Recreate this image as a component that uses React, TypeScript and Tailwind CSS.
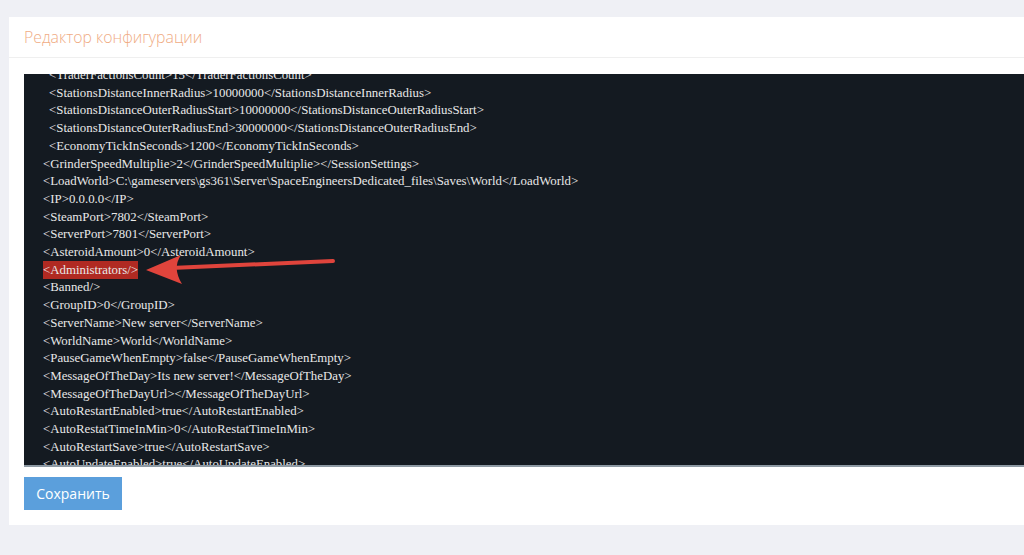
import React from "react";

const lines: { text: string; indent?: boolean; mark?: boolean }[] = [
  { text: "<TraderFactionsCount>15</TraderFactionsCount>", indent: true },
  { text: "<StationsDistanceInnerRadius>10000000</StationsDistanceInnerRadius>", indent: true },
  { text: "<StationsDistanceOuterRadiusStart>10000000</StationsDistanceOuterRadiusStart>", indent: true },
  { text: "<StationsDistanceOuterRadiusEnd>30000000</StationsDistanceOuterRadiusEnd>", indent: true },
  { text: "<EconomyTickInSeconds>1200</EconomyTickInSeconds>", indent: true },
  { text: "<GrinderSpeedMultiplie>2</GrinderSpeedMultiplie></SessionSettings>" },
  { text: "<LoadWorld>C:\\gameservers\\gs361\\Server\\SpaceEngineersDedicated_files\\Saves\\World</LoadWorld>" },
  { text: "<IP>0.0.0.0</IP>" },
  { text: "<SteamPort>7802</SteamPort>" },
  { text: "<ServerPort>7801</ServerPort>" },
  { text: "<AsteroidAmount>0</AsteroidAmount>" },
  { text: "<Administrators/>", mark: true },
  { text: "<Banned/>" },
  { text: "<GroupID>0</GroupID>" },
  { text: "<ServerName>New server</ServerName>" },
  { text: "<WorldName>World</WorldName>" },
  { text: "<PauseGameWhenEmpty>false</PauseGameWhenEmpty>" },
  { text: "<MessageOfTheDay>Its new server!</MessageOfTheDay>" },
  { text: "<MessageOfTheDayUrl></MessageOfTheDayUrl>" },
  { text: "<AutoRestartEnabled>true</AutoRestartEnabled>" },
  { text: "<AutoRestatTimeInMin>0</AutoRestatTimeInMin>" },
  { text: "<AutoRestartSave>true</AutoRestartSave>" },
  { text: "<AutoUpdateEnabled>true</AutoUpdateEnabled>" },
];

// red annotation arrow pointing at the highlighted tag
const Arrow = () => (
  <svg
    className="absolute left-[117px] top-[177px]"
    width="200"
    height="40"
    viewBox="0 0 200 40"
  >
    <path d="M192 10 L30 17" stroke="#e0443c" strokeWidth="4" strokeLinecap="round" fill="none" />
    <path d="M5 19 L40 4 Q31 17 41 33 Z" fill="#e0443c" />
  </svg>
);

export default function App() {
  return (
    <div className="h-[555px] overflow-hidden bg-[#eff0f5] pt-[17px] pl-[9px]">
      <div className="mr-[-20px] bg-white">
        <div className="h-[41px] border-b border-[#efefef] pl-[15px] pt-[9px]">
          <h2 className="text-[15.8px] font-light text-[#f0ac84] [font-family:'Open_Sans',sans-serif]">
            Редактор конфигурации
          </h2>
        </div>
        <div className="px-[15px] pt-[16px] pb-[15px]">
          <div className="relative h-[393px] overflow-hidden border-b-2 border-[#8d99a3] bg-[#141a21]">
            <div className="mt-[-7px] pl-[19px] text-[12.85px] leading-[17.7px] text-[#e8e8e8] [font-family:'Liberation_Serif',serif] whitespace-pre">
              {lines.map((l, i) => (
                <div key={i} className={l.indent ? "pl-[6px]" : ""}>
                  {l.mark ? (
                    <span className="bg-[#b02a22] py-[2px]">{l.text}</span>
                  ) : (
                    l.text
                  )}
                </div>
              ))}
            </div>
            <Arrow />
          </div>
          <button className="mt-[10px] h-[33px] w-[98px] bg-[#5b9fdc] text-[14px] text-white [font-family:'Open_Sans',sans-serif]">
            Сохранить
          </button>
        </div>
      </div>
    </div>
  );
}
